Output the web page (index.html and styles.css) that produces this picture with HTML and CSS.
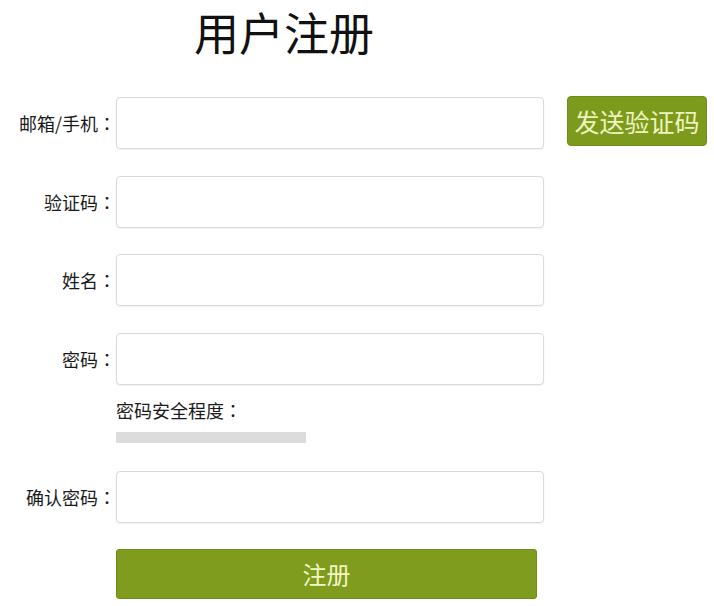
FILE: index.html
```html
<!DOCTYPE html>
<html>
<head>
    <meta charset="utf-8">
    <title>用户注册</title>
    <link rel="stylesheet" href="styles.css">
</head>
<body>
    <div class="page">
        <h1 class="title">用户注册</h1>

        <form class="reg-form">
            <div class="row">
                <label class="row-label">邮箱/手机<span class="colon">：</span></label>
                <input class="row-input" type="text">
                <button class="send-btn" type="button">发送验证码</button>
            </div>
            <div class="row">
                <label class="row-label">验证码<span class="colon">：</span></label>
                <input class="row-input" type="text">
            </div>
            <div class="row">
                <label class="row-label">姓名<span class="colon">：</span></label>
                <input class="row-input" type="text">
            </div>
            <div class="row row-pw">
                <label class="row-label">密码<span class="colon">：</span></label>
                <input class="row-input" type="password">
            </div>

            <!-- password strength -->
            <div class="strength">
                <div class="strength-label">密码安全程度<span class="colon">：</span></div>
                <div class="strength-bar"></div>
            </div>

            <div class="row">
                <label class="row-label">确认密码<span class="colon">：</span></label>
                <input class="row-input" type="password">
            </div>

            <button class="submit-btn" type="submit">注册</button>
        </form>
    </div>
</body>
</html>
```

FILE: styles.css
```css
html, body {
    margin: 0;
    padding: 0;
    background-color: #ffffff;
    color: #1a1a1a;
    font-family: "Noto Sans CJK SC", sans-serif;
}

.page {
    width: 714px;
}

.title {
    margin: 0;
    padding-left: 194px;
    font-size: 45px;
    line-height: 64px;
    font-weight: normal;
    color: #111111;
}

.reg-form {
    margin-top: 33px;
}

.row {
    display: flex;
    align-items: center;
    height: 52px;
    margin-bottom: 26.5px;
}

.row-pw {
    margin-bottom: 13px;
}

.row-label {
    width: 116px;
    text-align: right;
    font-size: 18px;
    line-height: 24px;
}

/* centred full-width colon */
.colon {
    font-family: "Noto Sans CJK TC", sans-serif;
}

.row-input {
    box-sizing: border-box;
    width: 428px;
    height: 52px;
    margin: 0;
    border: 1px solid #dadada;
    border-radius: 4px;
    background-color: #ffffff;
    box-shadow: 0 1px 2px rgba(0, 0, 0, 0.06);
    outline: none;
}

.send-btn {
    align-self: flex-start;
    box-sizing: border-box;
    width: 140px;
    height: 50px;
    margin: -1px 0 0 23px;
    padding: 0;
    border: 1px solid #6f8c17;
    border-radius: 4px;
    background-color: #7c9b1d;
    color: #eef4bd;
    font-family: "Noto Sans CJK SC", sans-serif;
    font-size: 25px;
    line-height: 48px;
}

/* Password strength */
.strength {
    margin-left: 116px;
    margin-bottom: 28px;
}

.strength-label {
    font-size: 18px;
    line-height: 24px;
}

.strength-bar {
    width: 190px;
    height: 11px;
    margin-top: 10px;
    background-color: #dcdcdc;
}

.submit-btn {
    display: block;
    box-sizing: border-box;
    width: 421px;
    height: 50px;
    margin: 26px 0 0 116px;
    padding: 0;
    border: 1px solid #718d18;
    border-radius: 3px;
    background-color: #7f9c1f;
    color: #f2f7c2;
    font-family: "Noto Sans CJK SC", sans-serif;
    font-size: 24px;
    line-height: 48px;
}
```
